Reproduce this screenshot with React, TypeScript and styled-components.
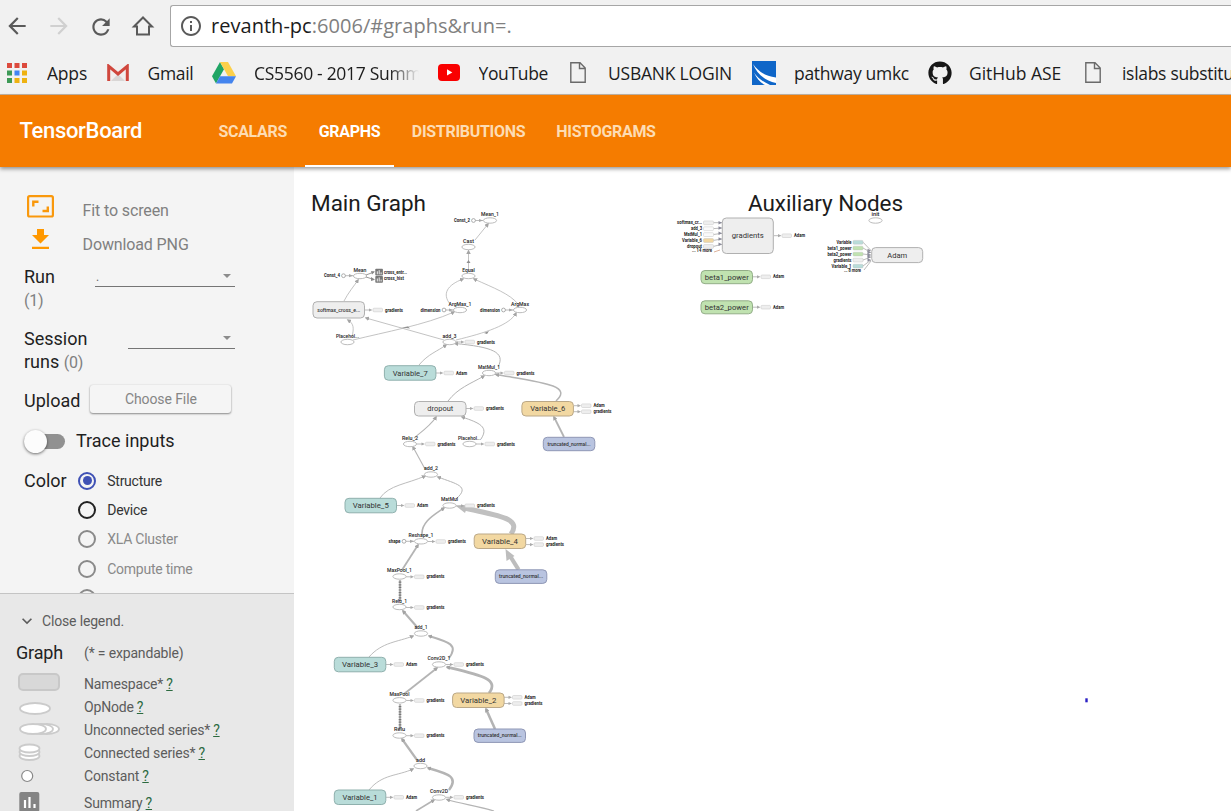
import React from "react";
import styled, { createGlobalStyle } from "styled-components";
import { FaGithub } from "react-icons/fa";
import {
  MdArrowBack,
  MdArrowForward,
  MdRefresh,
  MdKeyboardArrowDown,
  MdOutlineInfo,
} from "react-icons/md";

const GlobalStyle = createGlobalStyle`
  * { box-sizing: border-box; }
  body { margin: 0; background: #fff; overflow: hidden; font-family: Roboto, "Liberation Sans", sans-serif; }
`;

const Page = styled.div`
  width: 1231px;
  height: 811px;
  display: flex;
  flex-direction: column;
  overflow: hidden;
`;

/* ---------- browser chrome ---------- */

const Chrome = styled.div`
  height: 95px;
  flex: none;
  background: #f1f1f1;
  border-bottom: 1px solid #c3b5a6;
  font-family: "Open Sans", "Noto Sans", sans-serif;
`;

const AddressRow = styled.div`
  height: 51px;
  display: flex;
  padding-top: 5px;
`;

const NavButtons = styled.div`
  width: 170px;
  height: 42px;
  padding-left: 4px;
  display: flex;
  gap: 16px;
  align-items: center;
`;

const NavIcon = styled.span<{ $off?: boolean }>`
  width: 26px;
  height: 26px;
  display: flex;
  color: ${(p) => (p.$off ? "#d0d0d0" : "#5a5a5a")};
`;

const Omnibox = styled.div`
  flex: 1;
  height: 42px;
  background: #fff;
  border: 1px solid #a6a6a6;
  border-right: 0;
  border-radius: 3px 0 0 3px;
  display: flex;
  align-items: center;
  padding-left: 8px;
  color: #5a5a5a;
`;

const Url = styled.span`
  margin-left: 8px;
  font-size: 20px;
  line-height: 26px;
  letter-spacing: 0.03px;
  color: #808080;
  white-space: nowrap;
`;

const Host = styled.span`
  color: #1b1b1b;
`;

const BookmarkRow = styled.div`
  height: 43px;
  display: flex;
  align-items: center;
  padding-left: 7px;
  overflow: hidden;
`;

const BookmarkItem = styled.div<{ $w: number }>`
  flex: 0 0 ${(p) => p.$w}px;
  display: flex;
  align-items: center;
`;

const BookmarkIcon = styled.span<{ $w: number }>`
  flex: 0 0 ${(p) => p.$w}px;
  display: flex;
`;

const BookmarkText = styled.span<{ $ls: number; $fade?: boolean }>`
  font-size: 17.5px;
  line-height: 24px;
  color: #1c1c1c;
  white-space: nowrap;
  overflow: hidden;
  letter-spacing: ${(p) => p.$ls}px;
  ${(p) =>
    p.$fade &&
    `width: 165px; -webkit-mask-image: linear-gradient(90deg, #000 82%, transparent 100%);`}
`;

/* ---------- app header ---------- */

const Header = styled.header`
  height: 72px;
  flex: none;
  display: flex;
  background: #f57c00;
  box-shadow: 0 2px 4px rgba(0, 0, 0, 0.4);
  z-index: 1;
`;

const Brand = styled.div`
  width: 205px;
  padding-left: 19.5px;
  line-height: 72px;
  font-size: 22px;
  font-weight: 500;
  letter-spacing: -0.32px;
  color: #fff;
`;

const Tabs = styled.nav`
  display: flex;
  gap: 4.5px;
`;

const Tab = styled.div<{ $w: number; $active?: boolean }>`
  width: ${(p) => p.$w}px;
  height: 72px;
  line-height: 73px;
  text-align: center;
  font-size: 16px;
  font-weight: 700;
  letter-spacing: -0.3px;
  color: ${(p) => (p.$active ? "#fff" : "#fddcb3")};
  border-bottom: 2px solid ${(p) => (p.$active ? "#fff" : "transparent")};
`;

/* ---------- sidebar ---------- */

const Body = styled.div`
  flex: 1;
  display: flex;
  min-height: 0;
`;

const Sidebar = styled.aside`
  width: 294px;
  flex: none;
  background: #f4f4f4;
  display: flex;
  flex-direction: column;
`;

const Controls = styled.div`
  height: 426px;
  flex: none;
  overflow: hidden;
  padding: 19px 0 0 24px;
`;

const ActionRow = styled.div<{ $h: number; $gap?: number }>`
  height: ${(p) => p.$h}px;
  margin-bottom: ${(p) => p.$gap || 0}px;
  display: flex;
  align-items: center;
  font-size: 16px;
  letter-spacing: -0.12px;
  color: #808080;
`;

const ActionIcon = styled.span<{ $shift: number }>`
  width: 58.5px;
  display: flex;
  padding-bottom: ${(p) => p.$shift}px;
`;

const Field = styled.div<{ $h: number }>`
  height: ${(p) => p.$h}px;
  display: flex;
  justify-content: space-between;
  width: 211px;
`;

const Label = styled.div<{ $w?: number; $top?: number }>`
  font-size: 18px;
  line-height: 22.5px;
  color: #1f1f1f;
  padding-top: ${(p) => p.$top || 0}px;
  width: ${(p) => (p.$w ? `${p.$w}px` : "auto")};
`;

const Count = styled.span`
  font-size: 16px;
  letter-spacing: -0.2px;
  color: #808080;
`;

const Select = styled.div<{ $w: number }>`
  width: ${(p) => p.$w}px;
  height: 21px;
  border-bottom: 1px solid #757575;
  display: flex;
  justify-content: space-between;
  padding: 0 4px 0 1px;
  font-size: 12px;
  line-height: 22px;
  color: #666;
`;

const Caret = styled.span`
  margin-top: 8px;
  width: 0;
  height: 0;
  border: 4px solid transparent;
  border-top-color: #8c8c8c;
  border-bottom: 0;
  align-self: flex-start;
  margin-left: auto;
`;

const UploadRow = styled.div`
  height: 30px;
  display: flex;
  align-items: center;
`;

const FileButton = styled.div`
  width: 141px;
  height: 28px;
  margin: -4px 0 0 10px;
  border-radius: 3px;
  background: #f5f5f5;
  box-shadow: 0 1px 2px rgba(0, 0, 0, 0.42), 0 0 2px rgba(0, 0, 0, 0.1);
  text-align: center;
  font-size: 14px;
  letter-spacing: -0.1px;
  line-height: 28px;
  color: #858585;
`;

const ToggleRow = styled.div`
  height: 50px;
  display: flex;
  align-items: center;
`;

const ToggleTrack = styled.span`
  width: 41px;
  height: 15px;
  border-radius: 8px;
  background: #919191;
  display: flex;
  align-items: center;
  margin-right: 11px;
`;

const ToggleKnob = styled.span`
  width: 23px;
  height: 23px;
  flex: none;
  border-radius: 50%;
  background: #fcfcfc;
  box-shadow: 0 1px 3px rgba(0, 0, 0, 0.55);
`;

const ColorRow = styled.div`
  display: flex;
`;

const Radios = styled.div`
  display: flex;
  flex-direction: column;
  padding-left: 11.5px;
`;

const RadioItem = styled.div<{ $tone: string }>`
  height: 29.3px;
  display: flex;
  align-items: center;
  gap: 11px;
  font-size: 14px;
  letter-spacing: -0.25px;
  color: ${(p) => p.$tone};
`;

const Ring = styled.span<{ $c: string }>`
  width: 18px;
  height: 18px;
  border-radius: 50%;
  border: 2px solid ${(p) => p.$c};
  display: flex;
  align-items: center;
  justify-content: center;
`;

const Dot = styled.span`
  width: 9px;
  height: 9px;
  border-radius: 50%;
  background: #3f51b5;
`;

const Legend = styled.div`
  flex: 1;
  background: #e8e8e8;
  border-top: 1px solid #c4c4c4;
  padding: 15px 0 0 16px;
  font-size: 14px;
  letter-spacing: -0.16px;
  color: #5c5c5c;
  overflow: hidden;
`;

const LegendClose = styled.div`
  height: 24px;
  display: flex;
  align-items: center;
  gap: 5px;
  padding-left: 1px;
`;

const LegendTitle = styled.div`
  height: 39px;
  display: flex;
  align-items: center;
`;

const GraphWord = styled.span`
  width: 68px;
  font-size: 18px;
  color: #222;
`;

const LegendRow = styled.div<{ $h: number }>`
  height: ${(p) => p.$h}px;
  display: flex;
  align-items: flex-end;
  line-height: 19px;
`;

const LegendSymbol = styled.span<{ $lift: number }>`
  width: 68px;
  display: flex;
  padding-bottom: ${(p) => p.$lift}px;
`;

const Help = styled.a`
  color: #2c6a3f;
  text-decoration: underline;
  margin-left: 3px;
`;

const Canvas = styled.main`
  flex: 1;
  background: #fff;
  overflow: hidden;
  & > svg {
    display: block;
  }
`;

/* ---------- graph ---------- */

const INK = "#222";
const EDGE = "#b4b4b4";

const Tiny = ({ x, y, t, w, anchor = "start", bold }: any) => (
  <text
    x={x}
    y={y}
    fontSize={4.6}
    fontWeight={bold ? 700 : 500}
    textAnchor={anchor}
    textLength={w}
    lengthAdjust="spacingAndGlyphs"
    fill={INK}
  >
    {t}
  </text>
);

const fills: Record<string, [string, string]> = {
  grey: ["#eeeeee", "#b0b0b0"],
  teal: ["#b9dcd9", "#8fb0ad"],
  gold: ["#f2d8a2", "#bba887"],
  blue: ["#b9c4e0", "#8f97b5"],
  green: ["#c0e2b0", "#93ae88"],
};

const Box = ({ x, y, w = 51.5, h = 14.5, kind, t, tw, fs = 8 }: any) => (
  <g>
    <rect x={x} y={y} width={w} height={h} rx={4} fill={fills[kind][0]} stroke={fills[kind][1]} />
    <text
      x={x + w / 2}
      y={y + h / 2 + fs * 0.33}
      fontSize={fs}
      fontWeight={fs < 7 ? 500 : 400}
      textAnchor="middle"
      textLength={tw}
      lengthAdjust="spacingAndGlyphs"
      fill="#333"
    >
      {t}
    </text>
  </g>
);

const Op = ({ x, y, t, w }: any) => (
  <g>
    <ellipse cx={x} cy={y} rx={6.6} ry={2.7} fill="#fff" stroke="#b4b4b4" strokeWidth={0.9} />
    <Tiny x={x} y={y - 4.4} t={t} w={w} anchor="middle" />
  </g>
);

const Out = ({ from, x, y, t = "gradients" }: any) => (
  <g>
    <path d={`M${from} ${y}H${x - 3}`} stroke="#aaa" strokeWidth={0.8} />
    <path d={`M${x - 4} ${y - 1.6}L${x - 0.5} ${y}L${x - 4} ${y + 1.6}Z`} fill="#aaa" />
    <rect x={x} y={y - 1.8} width={9.5} height={3.6} rx={1} fill="#eee" stroke="#ccc" strokeWidth={0.6} />
    <Tiny x={x + 12} y={y + 1.5} t={t} w={t === "Adam" ? 11 : 18} bold />
  </g>
);

const In = ({ cx, y, to, t, w }: any) => (
  <g>
    <path d={`M${cx} ${y}H${to}`} stroke="#aaa" strokeWidth={0.8} />
    <path d={`M${to - 4} ${y - 1.6}L${to} ${y}L${to - 4} ${y + 1.6}Z`} fill="#aaa" />
    <circle cx={cx} cy={y} r={1.9} fill="#fff" stroke="#999" strokeWidth={0.8} />
    <Tiny x={cx - 3.5 - w} y={y + 1.5} t={t} w={w} bold />
  </g>
);

const SmallIn = ({ x, y, to, ty, c, t, w }: any) => (
  <g>
    <path d={`M${x + 10} ${y}L${to} ${ty}`} stroke="#aaa" strokeWidth={0.8} />
    <path d={`M${to - 3.5} ${ty - 1.8}L${to} ${ty}L${to - 3.5} ${ty + 1.8}Z`} fill="#8a8a9a" />
    <rect x={x} y={y - 1.8} width={10} height={3.8} rx={1} fill={c} stroke="#bbb" strokeWidth={0.4} />
    <Tiny x={x - 1.5 - w} y={y + 1.7} t={t} w={w} bold />
  </g>
);

const edges: [string, number][] = [
  ["M475 240L488 224", 0.8],
  ["M468.5 272V251", 0.8],
  ["M450 304C442 294 447 285 463 279", 0.8],
  ["M518 304C510 294 494 288 474 279", 0.8],
  ["M344 301C348 293 354 286 358 280", 0.8],
  ["M352 337C354 328 354 324 348 320", 0.8],
  ["M353 340C385 332 425 325 454 312", 0.8],
  ["M444 340L366 318", 0.8],
  ["M456 340C485 333 510 325 516 313", 0.8],
  ["M419 365C428 354 438 351 446 345", 0.9],
  ["M498 367C506 352 492 347 455 343.5", 1],
  ["M448 401C458 388 470 384 484 376", 1],
  ["M556 401C574 385 539 382 496 374.5", 1.5],
  ["M564 437L554 417", 1.8],
  ["M414 438C424 430 432 424 436 417", 1.1],
  ["M481 439C489 427 480 423 462 417", 1],
  ["M425 469L413 447", 1.1],
  ["M380 498C389 485 407 484 425 476", 0.9],
  ["M456 499C471 486 456 484 438 477", 1],
  ["M422 535C421 522 434 515 444 508", 1.6],
  ["M402 570L418 545", 1.8],
  ["M417 627L403 611", 2.1],
  ["M369 657C382 642 398 642 413 636", 0.9],
  ["M449 658C459 645 449 642 429 636", 2],
  ["M404 694L437 668", 1.8],
  ["M489 693C500 679 480 675 447 667", 2.8],
  ["M495 729L486 709", 2.6],
  ["M417 760L402 739", 2.2],
  ["M369 790C382 774 398 776 413 769", 0.9],
  ["M449 790C459 777 449 774 428 768", 2.4],
  ["M416 811L434 800", 1.6],
  ["M494 811C478 806 462 804 447 799.5", 1.3],
];

const ops: [number, number, string, number][] = [
  [490, 220.5, "Mean_1", 18],
  [468.5, 247, "Cast", 11],
  [468.5, 276, "Equal", 12.5],
  [460, 310, "ArgMax_1", 23],
  [520, 310, "ArgMax", 18],
  [360, 276, "Mean", 13],
  [347.5, 342, "Placehol...", 23],
  [449.5, 342, "add_3", 14],
  [489, 373, "MatMul_1", 22],
  [410, 444, "Relu_2", 16],
  [469.5, 444, "Placehol...", 23],
  [431, 474.5, "add_2", 14],
  [449.5, 505.5, "MatMul", 17],
  [421, 541.3, "Reshape_1", 25],
  [399.5, 576.5, "MaxPool_1", 25],
  [399.5, 607, "Relu_1", 15],
  [421, 633.5, "add_1", 13],
  [439, 664.5, "Conv2D_1", 23],
  [399.5, 700.3, "MaxPool", 20],
  [399.5, 735.5, "Relu", 11],
  [420.5, 766, "add", 9],
  [439, 797.5, "Conv2D", 18],
  [875.5, 220.5, "init", 8],
];

const outs: [number, number, number, string?][] = [
  [365, 373, 310],
  [456, 465, 342],
  [436, 444, 373, "Adam"],
  [496, 504.5, 373],
  [466, 474, 408.5],
  [574, 581.5, 405.7, "Adam"],
  [574, 581.5, 411.7],
  [417, 425.5, 444],
  [476, 485, 444],
  [397, 405, 505.5, "Adam"],
  [456, 465, 505.8],
  [428, 436, 541.5],
  [526, 534, 538.5, "Adam"],
  [526, 534, 544.6],
  [406, 414.5, 576.8],
  [406, 414.5, 607.5],
  [386, 394, 664.5, "Adam"],
  [446, 454, 664.5],
  [406, 414.5, 700.5],
  [504, 512.5, 697.3, "Adam"],
  [504, 512.5, 703.5],
  [406, 414.5, 735.7],
  [386, 394, 797.3, "Adam"],
  [446, 454, 797.3],
  [774, 782, 235.7, "Adam"],
  [753, 761, 276.8, "Adam"],
  [753, 761, 307.2, "Adam"],
];

const Graph = () => (
  <svg width="937" height="644" viewBox="294 167 937 644" fontFamily="Roboto, sans-serif">
    <defs>
      <marker id="tip" viewBox="0 0 6 6" refX="4" refY="3" markerWidth="4.6" markerHeight="4.6" markerUnits="userSpaceOnUse" orient="auto">
        <path d="M0 0L6 3L0 6Z" fill="#a4a4a4" />
      </marker>
    </defs>
    <text x="311" y="210.8" fontSize="22.5" fill="#1c1c1c" textLength="115">Main Graph</text>
    <text x="748" y="210.8" fontSize="22.5" fill="#1c1c1c" textLength="155">Auxiliary Nodes</text>
    <g fill="none" stroke={EDGE}>
      {edges.map(([d, w]) => (
        <path key={d} d={d} strokeWidth={w} markerEnd="url(#tip)" />
      ))}
      <path d="M511 534C522 518 499 516 464 508" stroke="#c0c0c0" strokeWidth="5" />
      <path d="M518.5 569.5L510 556" stroke="#bdbdbd" strokeWidth="4.2" />
      <path d="M400 601V580M400 729V704" stroke="#bbb" strokeWidth="2.2" />
      <path d="M400 601V581M400 728V705" stroke="#777" strokeWidth="2.6" strokeDasharray="1.2 1.4" />
    </g>
    <path d="M456 506L468 505L465 513Z" fill="#bdbdbd" />
    <path d="M505.5 549L514.5 556L506.5 561Z" fill="#bdbdbd" />
    <g fill="#8f8f8f">
      <path d="M466.5 263l4 0l-2 -3z" />
      <path d="M398 328l10 -1.500l2 2l-8 -1z" />
      <path d="M484 333l5 -2l-2 3z" />
    </g>
    {outs.map(([from, x, y, t], i) => (
      <Out key={i} from={from} x={x} y={y} t={t} />
    ))}
    <In cx={473.5} y={220.5} to={483} t="Const_2" w={16} />
    <In cx={343.5} y={275.7} to={353} t="Const_4" w={16} />
    <In cx={444} y={310} to={453} t="dimension" w={20} />
    <In cx={503.5} y={310} to={513} t="dimension" w={20} />
    <In cx={404} y={541.3} to={414} t="shape" w={12} />
    {ops.map(([x, y, t, w]) => (
      <Op key={`${x}-${y}`} x={x} y={y} t={t} w={w} />
    ))}
    <g>
      <path d="M366 275L374 272M366 277L374 279.5" stroke="#999" strokeWidth="1" />
      <path d="M371 271L375 271.500L372 274.500ZM371 277L375 279.800L371 281Z" fill="#888" />
      {[268.8, 276].map((y) => (
        <g key={y}>
          <rect x="375.3" y={y} width="7.6" height="6.8" rx="0.8" fill="#777" />
          <path d={`M377.3 ${y + 2.5}v3M379.2 ${y + 1.4}v4.1M381.1 ${y + 3.6}v1.9`} stroke="#fff" strokeWidth="0.9" />
        </g>
      ))}
      <Tiny x={384} y={274.3} t="cross_entr..." w={23} bold />
      <Tiny x={384} y={280.3} t="cross_hist" w={20} bold />
    </g>
    <Box x={313} y={301.7} h={16.3} kind="grey" t="softmax_cross_e..." tw={43} fs={5.2} />
    <Box x={384.4} y={365.7} kind="teal" t="Variable_7" tw={35} />
    <Box x={414.5} y={401.5} kind="grey" t="dropout" tw={26} />
    <Box x={521.9} y={401.5} kind="gold" t="Variable_6" tw={35} />
    <Box x={543.3} y={437.3} h={13.4} kind="blue" t="truncated_normal..." tw={43} fs={5.2} />
    <Box x={345} y={498.3} kind="teal" t="Variable_5" tw={36} />
    <Box x={474.2} y={534} kind="gold" t="Variable_4" tw={36} />
    <Box x={495.3} y={569.8} h={13.6} kind="blue" t="truncated_normal..." tw={44} fs={5.2} />
    <Box x={334.3} y={657.3} kind="teal" t="Variable_3" tw={36} />
    <Box x={452.6} y={693} kind="gold" t="Variable_2" tw={36} />
    <Box x={474} y={729} h={13.4} kind="blue" t="truncated_normal..." tw={44} fs={5.2} />
    <Box x={334.3} y={790} kind="teal" t="Variable_1" tw={35} />

    <Box x={722.3} y={218} w={51} h={35.5} kind="grey" t="gradients" tw={32} />
    <SmallIn x={703.5} y={222.7} to={722} ty={222.7} c="#eee" t="softmax_cr..." w={25} />
    <SmallIn x={703.5} y={228.6} to={722} ty={228} c="#fafafa" t="add_3" w={11} />
    <SmallIn x={703.5} y={234.5} to={722} ty={233.3} c="#fafafa" t="MatMul_1" w={18} />
    <SmallIn x={703.5} y={240.4} to={722} ty={239} c="#f2d8a2" t="Variable_6" w={20} />
    <SmallIn x={703.5} y={246.4} to={722} ty={244.3} c="#eee" t="dropout" w={15} />
    <Tiny x={692} y={252.3} t="... 14 more" w={20} bold />
    <path d="M714 252L720 250" stroke="#d9a88f" strokeWidth="0.9" />
    <Box x={871.7} y={247.6} w={51} h={15} kind="grey" t="Adam" tw={20} />
    <SmallIn x={853} y={242.2} to={871} ty={250.5} c="#b9dcd9" t="Variable" w={15} />
    <SmallIn x={853} y={248} to={871} ty={252.5} c="#c0e2b0" t="beta1_power" w={24} />
    <SmallIn x={853} y={254} to={871} ty={255} c="#c0e2b0" t="beta2_power" w={24} />
    <SmallIn x={853} y={260} to={871} ty={257} c="#eee" t="gradients" w={18} />
    <SmallIn x={853} y={266} to={871} ty={260} c="#b9dcd9" t="Variable_1" w={20} />
    <Tiny x={844} y={272.2} t="... 8 more" w={17} bold />
    <path d="M864 270L871 261" stroke="#aaa" strokeWidth="0.8" />
    <Box x={701} y={270.5} h={13.2} kind="green" t="beta1_power" tw={44} />
    <Box x={701} y={300.8} h={13} kind="green" t="beta2_power" tw={44} />
    <rect x="1085.3" y="698.3" width="2.4" height="4" fill="#2b20c4" />
  </svg>
);

/* ---------- drawn icons ---------- */

const AppsIcon = () => (
  <svg width="20" height="20" viewBox="0 0 20 20">
    {["#dc4a3d", "#dc4a3d", "#dc4a3d", "#3d9a57", "#4285f4", "#eeb211", "#3d9a57", "#eeb211", "#eeb211"].map((c, i) => (
      <rect key={i} x={(i % 3) * 7.5} y={Math.floor(i / 3) * 7.5} width="5" height="5" fill={c} />
    ))}
  </svg>
);

const GmailIcon = () => (
  <svg width="22" height="18" viewBox="0 0 22 18">
    <rect x="1" y="1" width="20" height="16" rx="1" fill="#f1efee" />
    <path d="M4 17L11 10L18 17Z" fill="#d9d6d5" />
    <path d="M1.7 17V2.2L11 10L20.3 2.2V17" fill="none" stroke="#d0473d" strokeWidth="3" />
  </svg>
);

const DriveIcon = () => (
  <svg width="24" height="22" viewBox="0 0 24 22">
    <path d="M8 0L0 14.3L4 21.5L12 7.2Z" fill="#20a565" />
    <path d="M8 0H16L24 14.3H16Z" fill="#fcd04b" />
    <path d="M8 14.3H24L20 21.5H4Z" fill="#4484ee" />
  </svg>
);

const YouTubeIcon = () => (
  <svg width="22" height="17" viewBox="0 0 22 17">
    <rect width="22" height="17" rx="4" fill="#f90000" />
    <path d="M9 5.2L14.3 8.4L9 11.6Z" fill="#fff" />
  </svg>
);

const PageIcon = () => (
  <svg width="16" height="21" viewBox="0 0 16 21" fill="none" stroke="#6a6a6a" strokeWidth="1.4">
    <path d="M0.8 0.8H10L15.2 6V20.2H0.8ZM9.5 0.8V6.5H15.2" />
  </svg>
);

const WaveIcon = () => (
  <svg width="24" height="24" viewBox="0 0 24 24">
    <rect width="24" height="24" fill="#0f66c8" />
    <path d="M1 3C6 10 13 15.500 24 16.500V22C13 19.500 5 13 1 3Z" fill="#fff" />
    <path d="M2 11.500C5 16.500 11 21 18 24H13C8 21.500 4.500 17 2 11.500Z" fill="#fff" />
  </svg>
);

const HomeIcon = () => (
  <svg width="26" height="26" viewBox="0 0 26 26" fill="none" stroke="#5a5a5a" strokeWidth="2">
    <path d="M4 13.500L13 4.500L22 13.500H19V21.500H7V13.500Z" />
  </svg>
);

const FitIcon = () => (
  <svg width="32" height="23" viewBox="0 0 32 23" fill="none" stroke="#f9980c">
    <rect x="4.100" y="1.200" width="24.800" height="20.300" rx="1.500" strokeWidth="2.200" />
    <path d="M9.300 11.500V6.800H14.500M18.500 16H23.800V11.500" strokeWidth="2.400" />
  </svg>
);

const DownloadIcon = () => (
  <svg width="32" height="24" viewBox="0 0 32 24" fill="#ff9800">
    <path d="M13 1H20V7H25L16.500 15.500L8 7H13ZM8 18.700H25V21H8Z" />
  </svg>
);

const bookmarks: { w: number; iw: number; ls: number; t: string; icon: React.ReactNode; fade?: boolean }[] = [
  { w: 100, iw: 40, ls: -0.2, t: "Apps", icon: <AppsIcon /> },
  { w: 105, iw: 40.5, ls: -0.3, t: "Gmail", icon: <GmailIcon /> },
  { w: 226, iw: 42, ls: -0.3, t: "CS5560 - 2017 Summer", icon: <DriveIcon />, fade: true },
  { w: 132, iw: 40.5, ls: -0.35, t: "YouTube", icon: <YouTubeIcon /> },
  { w: 182, iw: 38, ls: -0.22, t: "USBANK LOGIN", icon: <PageIcon /> },
  { w: 176, iw: 42, ls: -0.3, t: "pathway umkc", icon: <WaveIcon /> },
  { w: 157, iw: 41, ls: -0.05, t: "GitHub ASE", icon: <FaGithub size={24} color="#171717" /> },
  { w: 200, iw: 37, ls: -0.3, t: "islabs substitution", icon: <PageIcon /> },
];

const series = { fill: "#fff", stroke: "#cbcbcb", strokeWidth: 1.8 };

const legend: { h: number; lift: number; t: string; icon: React.ReactNode }[] = [
  { h: 22, lift: 2, t: "Namespace*", icon: <svg width="44" height="20"><rect x="3" y="2" width="40" height="16" rx="4" fill="#d8d8d8" stroke="#c8c8c8" strokeWidth="2" /></svg> },
  { h: 23, lift: 0, t: "OpNode", icon: <svg width="40" height="18"><ellipse cx="19" cy="9.5" rx="15" ry="5.5" {...series} /></svg> },
  { h: 23, lift: 3, t: "Unconnected series*", icon: <svg width="46" height="16"><ellipse cx="31" cy="8" rx="12" ry="5" {...series} /><ellipse cx="25" cy="8" rx="12" ry="5" {...series} /><ellipse cx="17" cy="8" rx="13" ry="5" {...series} /></svg> },
  { h: 23, lift: 2, t: "Connected series*", icon: <svg width="30" height="18"><ellipse cx="13.5" cy="13" rx="10" ry="4" {...series} /><ellipse cx="13.5" cy="9" rx="10" ry="4" {...series} /><ellipse cx="13.5" cy="5.5" rx="10" ry="4" {...series} /></svg> },
  { h: 23, lift: 3, t: "Constant", icon: <svg width="24" height="14"><circle cx="11.2" cy="7" r="5.5" fill="#fff" stroke="#888" strokeWidth="1.2" /></svg> },
  { h: 27, lift: 1, t: "Summary", icon: <svg width="26" height="20"><rect x="3.3" y="0" width="20" height="20" rx="2" fill="#848484" /><path d="M9 8v8M13.500 5v11M18.500 12v4" stroke="#fff" strokeWidth="2.2" /></svg> },
];

export default function App() {
  return (
    <Page>
      <GlobalStyle />
      <Chrome>
        <AddressRow>
          <NavButtons>
            <NavIcon><MdArrowBack size={26} /></NavIcon>
            <NavIcon $off><MdArrowForward size={26} /></NavIcon>
            <NavIcon><MdRefresh size={28} /></NavIcon>
            <NavIcon><HomeIcon /></NavIcon>
          </NavButtons>
          <Omnibox>
            <MdOutlineInfo size={24} />
            <Url><Host>revanth-pc</Host>:6006/#graphs&amp;run=.</Url>
          </Omnibox>
        </AddressRow>
        <BookmarkRow>
          {bookmarks.map((b) => (
            <BookmarkItem key={b.t} $w={b.w}>
              <BookmarkIcon $w={b.iw}>{b.icon}</BookmarkIcon>
              <BookmarkText $ls={b.ls} $fade={b.fade}>{b.t}</BookmarkText>
            </BookmarkItem>
          ))}
        </BookmarkRow>
      </Chrome>
      <Header>
        <Brand>TensorBoard</Brand>
        <Tabs>
          <Tab $w={95.5}>SCALARS</Tab>
          <Tab $w={89} $active>GRAPHS</Tab>
          <Tab $w={140}>DISTRIBUTIONS</Tab>
          <Tab $w={126}>HISTOGRAMS</Tab>
        </Tabs>
      </Header>
      <Body>
        <Sidebar>
          <Controls>
            <ActionRow $h={48}>
              <ActionIcon $shift={8}><FitIcon /></ActionIcon>
              Fit to screen
            </ActionRow>
            <ActionRow $h={20} $gap={12}>
              <ActionIcon $shift={8}><DownloadIcon /></ActionIcon>
              Download PNG
            </ActionRow>
            <Field $h={62}>
              <Label $w={40}>Run <Count>(1)</Count></Label>
              <Select $w={140}>.<Caret /></Select>
            </Field>
            <Field $h={58}>
              <Label $w={80}>Session runs <Count>(0)</Count></Label>
              <Select $w={107}><Caret /></Select>
            </Field>
            <UploadRow><Label>Upload</Label><FileButton>Choose File</FileButton></UploadRow>
            <ToggleRow>
              <ToggleTrack><ToggleKnob /></ToggleTrack>
              <Label>Trace inputs</Label>
            </ToggleRow>
            <ColorRow>
              <Label $top={3.5}>Color</Label>
              <Radios>
                <RadioItem $tone="#333"><Ring $c="#3f51b5"><Dot /></Ring>Structure</RadioItem>
                <RadioItem $tone="#333"><Ring $c="#222" />Device</RadioItem>
                <RadioItem $tone="#8a8a8a"><Ring $c="#8a8a8a" />XLA Cluster</RadioItem>
                <RadioItem $tone="#8a8a8a"><Ring $c="#8a8a8a" />Compute time</RadioItem>
                <RadioItem $tone="#8a8a8a"><Ring $c="#8a8a8a" /></RadioItem>
              </Radios>
            </ColorRow>
          </Controls>
          <Legend>
            <LegendClose><MdKeyboardArrowDown size={20} />Close legend.</LegendClose>
            <LegendTitle><GraphWord>Graph</GraphWord>(* = expandable)</LegendTitle>
            {legend.map((l) => (
              <LegendRow key={l.t} $h={l.h}>
                <LegendSymbol $lift={l.lift}>{l.icon}</LegendSymbol>
                {l.t}<Help>?</Help>
              </LegendRow>
            ))}
          </Legend>
        </Sidebar>
        <Canvas><Graph /></Canvas>
      </Body>
    </Page>
  );
}
